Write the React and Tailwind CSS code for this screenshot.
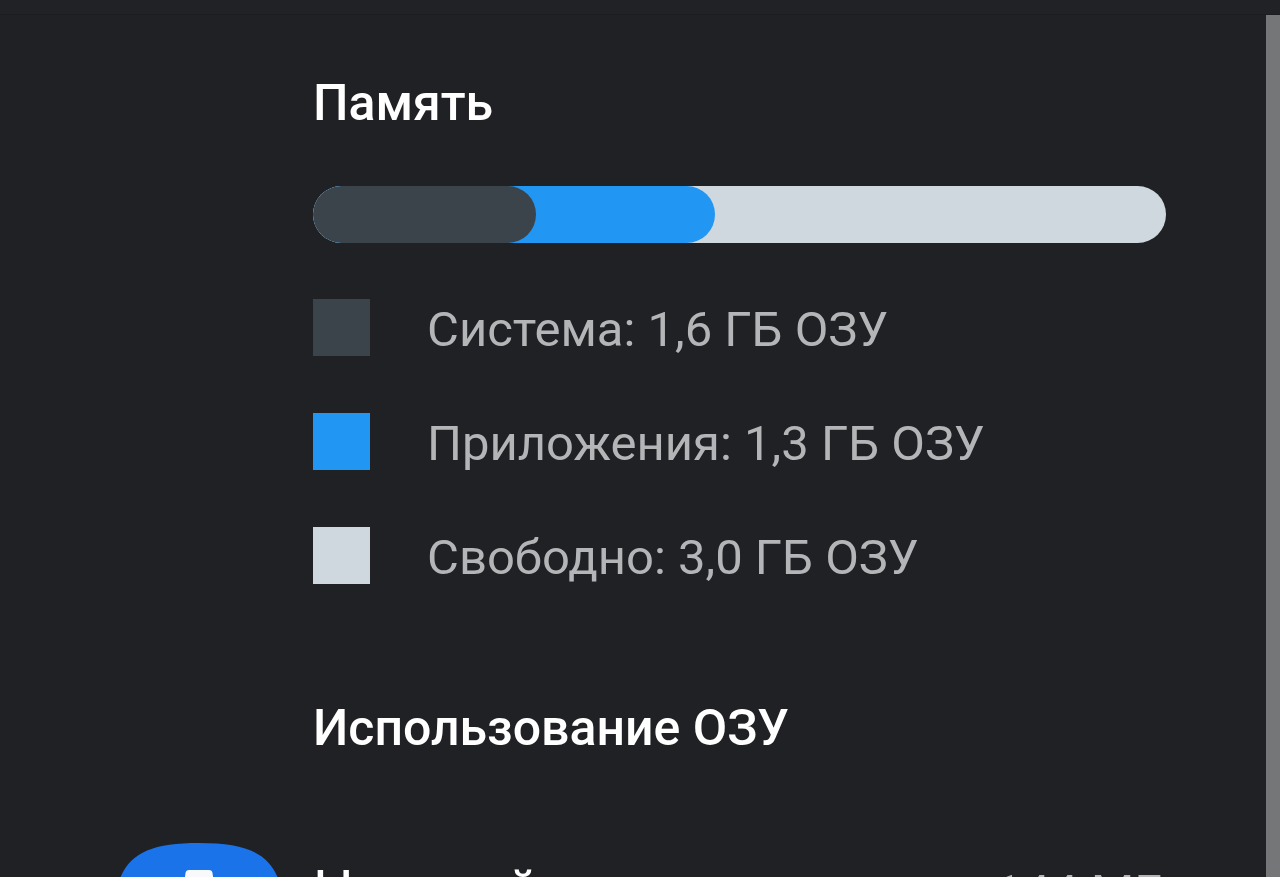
const segments = [
  { label: 'Система: 1,6 ГБ ОЗУ', color: 'bg-[#3b444a]' },
  { label: 'Приложения: 1,3 ГБ ОЗУ', color: 'bg-[#2196f3]' },
  { label: 'Свободно: 3,0 ГБ ОЗУ', color: 'bg-[#cfd8de]' },
];

const teeth = [0, 45, 90, 135, 180, 225, 270, 315];

function SettingsIcon() {
  return (
    <svg viewBox="0 0 172 172" className="size-[172px] shrink-0" aria-hidden="true">
      <path
        d="M86 0C153 0 172 20 172 86C172 152 153 172 86 172C19 172 0 152 0 86C0 20 19 0 86 0Z"
        fill="#1a73e8"
      />
      <g fill="#f8f9fa">
        {teeth.map((angle) => (
          <path
            key={angle}
            d="M76 27H96Q99 27 99.500 30L102 48H70L72.500 30Q73 27 76 27Z"
            transform={`rotate(${angle} 86 86)`}
          />
        ))}
        <circle cx="86" cy="86" r="43" />
      </g>
      <circle cx="86" cy="86" r="20" fill="#1a73e8" />
    </svg>
  );
}

function MemoryBar() {
  return (
    <div
      role="img"
      aria-label="Память"
      className="relative h-[57px] overflow-hidden rounded-full bg-[#cfd8de]"
    >
      <div className="absolute inset-y-0 left-0 w-[47.1%] rounded-full bg-[#2196f3]" />
      <div className="absolute inset-y-0 left-0 w-[26.1%] rounded-full bg-[#3b444a]" />
    </div>
  );
}

export default function App() {
  return (
    <div className="flex h-screen flex-col overflow-hidden bg-[#202124] font-['Roboto',sans-serif] text-white">
      <header className="h-[15px] shrink-0 border-b border-[#1c1d20] bg-[#212226]" />
      <div className="flex min-h-0 flex-1">
        <main className="min-w-0 flex-1 overflow-hidden pt-14">
          <section className="pr-[100px] pl-[313px]">
            <h1 className="text-[50px] leading-16 font-medium">Память</h1>
            <div className="pt-[51px]">
              <MemoryBar />
            </div>
            <ul className="flex flex-col gap-[57px] pt-14">
              {segments.map(({ label, color }) => (
                <li key={label} className="flex h-[57px] items-center gap-[57px]">
                  <span className={`size-[57px] shrink-0 ${color}`} />
                  <span className="pt-1 text-[49px] leading-16 whitespace-nowrap text-[#b4b5b7]">{label}</span>
                </li>
              ))}
            </ul>
          </section>
          <section className="pt-28">
            <h2 className="pl-[313px] text-[50px] leading-16 font-medium">Использование ОЗУ</h2>
            <a href="#settings" className="mt-[83px] flex items-start gap-7 pr-[100px] pl-[113px]">
              <SettingsIcon />
              <span className="flex flex-1 items-baseline justify-between pt-[13px] whitespace-nowrap">
                <span className="text-[57px] leading-[72px]">Настройки</span>
                <span className="text-[50px] leading-16 text-[#b4b5b7]">144 МБ</span>
              </span>
            </a>
          </section>
        </main>
        <div className="w-3.5 shrink-0 bg-[#757678]" />
      </div>
    </div>
  );
}
